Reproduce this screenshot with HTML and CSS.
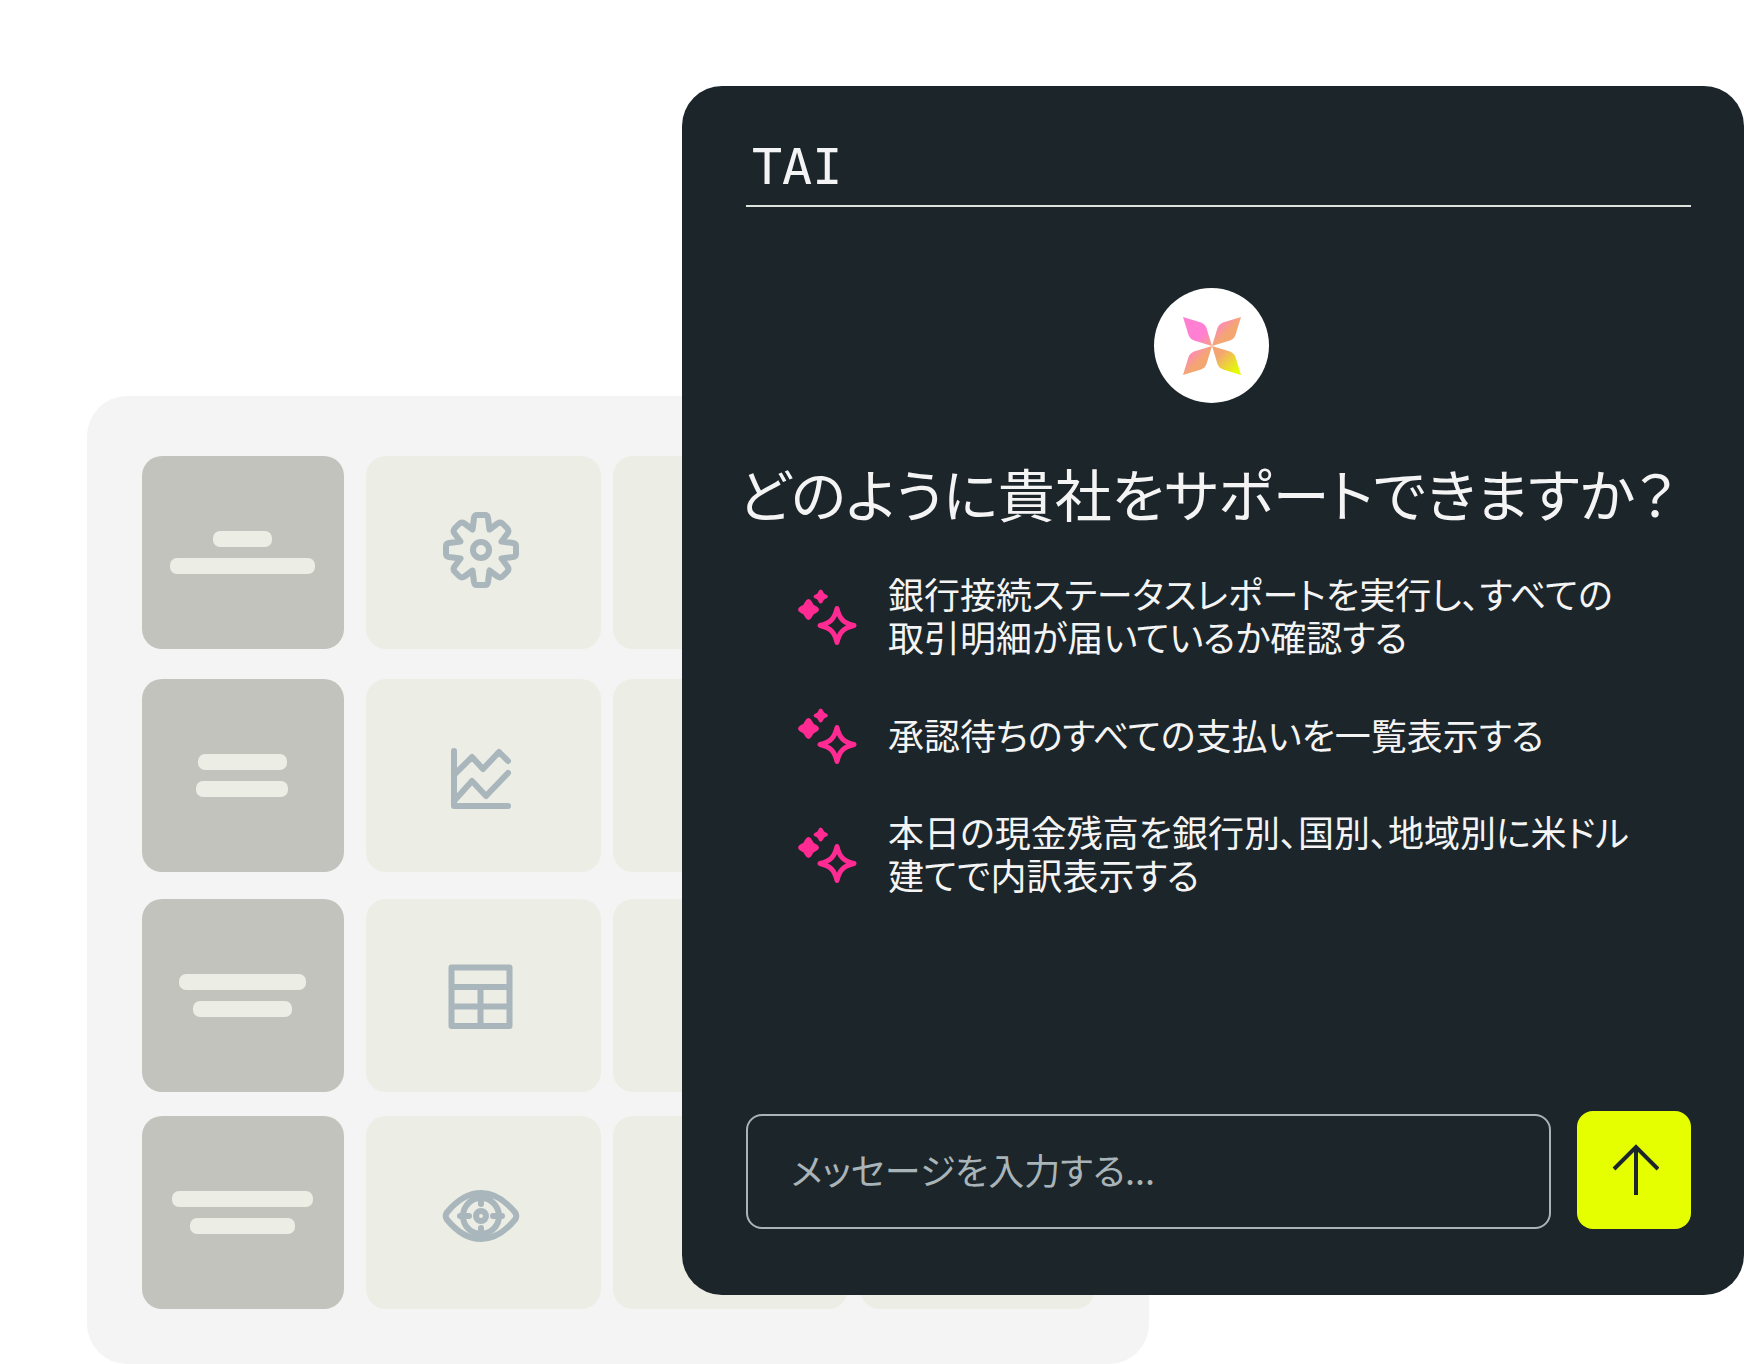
FILE: index.html
```html
<!DOCTYPE html>
<html lang="ja">
<head>
    <meta charset="UTF-8">
    <meta name="viewport" content="width=device-width, initial-scale=1.0">
    <title>TAI</title>
    <link rel="stylesheet" href="styles.css">
</head>
<body>
    <!-- Shared shapes -->
    <svg class="defs" width="0" height="0" aria-hidden="true">
        <symbol id="sparkles" viewBox="0 0 60 58">
            <path d="M23.500 .5 Q25.500 .5 26.500 3.500 Q27 4.500 28 5 Q31 6 31 7.500 Q31 9 28 10 Q27 10.500 26.500 11.500 Q25.500 14.500 23.500 14.500 Q22 14.500 21 11.500 Q20.500 10.500 19.500 10 Q16.500 9 16.500 7.500 Q16.500 6 19.500 5 Q20.500 4.500 21 3.500 Q22 .5 23.500 .5Z" fill="#ff2a92"/>
            <path d="M11.500 10 Q13.500 10 15 13 Q16 16 19 17 Q22 18.500 22 20.500 Q22 22.500 19 24 Q16 25 15 28 Q13.500 31 11.500 31 Q9.500 31 8 28 Q7 25 4 24 Q1 22.500 1 20.500 Q1 18.500 4 17 Q7 16 8 13 Q9.500 10 11.500 10Z" fill="#ff2a92"/>
            <path d="M40 19.500 C42.500 30 46.500 34 57 36.500 C46.500 39 42.500 43 40 53.500 C37.500 43 33.500 39 23 36.500 C33.500 34 37.500 30 40 19.500Z" fill="none" stroke="#ff2a92" stroke-width="5" stroke-linejoin="round"/>
        </symbol>
    </svg>

    <main class="page">
        <section class="board" aria-hidden="true">
            <div class="label"><span class="bar w-59"></span><span class="bar w-145"></span></div>
            <div class="cell">
                <svg class="icon" viewBox="0 0 90 90">
                    <g transform="translate(42 42)">
                        <path d="M-8.500 -20.500 L-7 -32 Q-6.500 -35 -4 -35 H4 Q6.500 -35 7 -32 L8.500 -20.500 L16.500 -26.500 Q19.500 -28.500 22 -26 L26 -22 Q28.500 -19.500 26.500 -16.500 L20.500 -8.500 L32 -7 Q35 -6.500 35 -4 V4 Q35 6.500 32 7 L20.500 8.500 L26.500 16.500 Q28.500 19.500 26 22 L22 26 Q19.500 28.500 16.500 26.500 L8.500 20.500 L7 32 Q6.500 35 4 35 H-4 Q-6.500 35 -7 32 L-8.500 20.500 L-16.500 26.500 Q-19.500 28.500 -22 26 L-26 22 Q-28.500 19.500 -26.500 16.500 L-20.500 8.500 L-32 7 Q-35 6.500 -35 4 V-4 Q-35 -6.500 -32 -7 L-20.500 -8.500 L-26.500 -16.500 Q-28.500 -19.500 -26 -22 L-22 -26 Q-19.500 -28.500 -16.500 -26.500 Z"/>
                        <circle r="8"/>
                    </g>
                </svg>
            </div>
            <div class="cell"></div>
            <div class="cell"></div>

            <div class="label"><span class="bar w-89"></span><span class="bar w-92"></span></div>
            <div class="cell">
                <svg class="icon" viewBox="0 0 90 90">
                    <path d="M15 20 V75 H69"/>
                    <path d="M15 44 L33 26 L44 38 L60 21 L69 30"/>
                    <path d="M15 70 L33 50 L47 65 L69 42"/>
                </svg>
            </div>
            <div class="cell"></div>
            <div class="cell"></div>

            <div class="label"><span class="bar w-127"></span><span class="bar w-99"></span></div>
            <div class="cell">
                <svg class="icon" viewBox="0 0 90 90">
                    <path d="M12.500 16.500 H70.500 V75 H12.500 Z M12.500 36 H70.500 M12.500 55.500 H70.500 M41.500 36 V75"/>
                </svg>
            </div>
            <div class="cell"></div>
            <div class="cell"></div>

            <div class="label"><span class="bar w-141"></span><span class="bar w-105"></span></div>
            <div class="cell">
                <svg class="icon" viewBox="0 0 90 90">
                    <g transform="translate(42 48)">
                        <path d="M-34.500 -3 C-24 -16 -12 -23 0 -23 S24 -16 34.500 -3 Q36 0 34.500 3 C24 16 12 23 0 23 S-24 16 -34.500 3 Q-36 0 -34.500 -3Z"/>
                        <circle r="18"/>
                        <circle r="5"/>
                        <path d="M-21 0 H-12 M12 0 H21 M0 -22 V-12 M0 12 V22"/>
                    </g>
                </svg>
            </div>
            <div class="cell"></div>
            <div class="cell"></div>
        </section>

        <section class="chat">
            <header class="chat-header">TAI</header>

            <div class="logo">
                <svg viewBox="-29 -29 58 58" width="58" height="58" aria-hidden="true">
                    <defs>
                        <linearGradient id="petal" gradientUnits="userSpaceOnUse" x1="-29" y1="-29" x2="29" y2="29">
                            <stop offset=".32" stop-color="#ff80d2"/>
                            <stop offset=".52" stop-color="#f4a672"/>
                            <stop offset=".64" stop-color="#f4a672"/>
                            <stop offset=".94" stop-color="#e5ff00"/>
                        </linearGradient>
                    </defs>
                    <g fill="url(#petal)">
                        <path d="M0 0 L-5.500 -18 Q-7 -22 -11 -23.500 L-29 -29 L-23.500 -11 Q-22 -7 -18 -5.500Z"/>
                        <path d="M0 0 L5.500 -18 Q7 -22 11 -23.500 L29 -29 L23.500 -11 Q22 -7 18 -5.500Z"/>
                        <path d="M0 0 L-5.500 18 Q-7 22 -11 23.500 L-29 29 L-23.500 11 Q-22 7 -18 5.500Z"/>
                        <path d="M0 0 L5.500 18 Q7 22 11 23.500 L29 29 L23.500 11 Q22 7 18 5.500Z"/>
                    </g>
                </svg>
            </div>

            <h1>どのように貴社をサポートできますか？</h1>

            <ul class="prompts">
                <li>
                    <svg class="sparkles"><use href="#sparkles"/></svg>
                    <p>銀行接続ステータスレポートを実行し、すべての<br>取引明細が届いているか確認する</p>
                </li>
                <li>
                    <svg class="sparkles"><use href="#sparkles"/></svg>
                    <p>承認待ちのすべての支払いを一覧表示する</p>
                </li>
                <li>
                    <svg class="sparkles"><use href="#sparkles"/></svg>
                    <p>本日の現金残高を銀行別、国別、地域別に米ドル<br>建てで内訳表示する</p>
                </li>
            </ul>

            <form class="composer" onsubmit="return false">
                <input type="text" aria-label="メッセージ" placeholder="メッセージを入力する...">
                <button type="submit" aria-label="送信">
                    <svg viewBox="0 0 50 54" width="50" height="54" fill="none" stroke="#1b252a" stroke-width="4">
                        <path d="M27 52 V5 M5 26 L27 4 L49 26"/>
                    </svg>
                </button>
            </form>
        </section>
    </main>
</body>
</html>
```

FILE: styles.css
```css
* {
    box-sizing: border-box;
}
body {
    margin: 0;
    background-color: #fff;
    color: #f4f4f4;
    font-family: "Noto Sans CJK JP", sans-serif;
    font-weight: 400;
    font-feature-settings: "palt";
}
.defs {
    position: absolute;
}

/* The two panels share one grid row and overlap in the third column */
.page {
    display: grid;
    grid-template-columns: 87fr 595fr 467fr 595fr;
    align-items: start;
    padding-top: 86px;
}

/* Board in the background */
.board {
    grid-column: 2 / 4;
    grid-row: 1;
    display: grid;
    grid-template-columns: 212fr 235fr 235fr 235fr;
    grid-template-rows: 223px 220px 217px 193px;
    column-gap: 12px;
    align-items: start;
    margin-top: 310px;
    padding: 60px 54px 55px 55px;
    border-radius: 40px;
    background-color: #f4f4f4;
}
.label,
.cell {
    display: flex;
    align-items: center;
    justify-content: center;
    height: 193px;
    border-radius: 20px;
}
.label {
    flex-direction: column;
    gap: 11px;
    margin-right: 10px;
    padding-right: 2px;
    background-color: #c2c3bc;
}
.cell {
    background-color: #ecede4;
}
.bar {
    height: 16px;
    border-radius: 7px;
    background-color: #ecede4;
}
.w-59 { width: 59px; }
.w-89 { width: 89px; }
.w-92 { width: 92px; }
.w-99 { width: 99px; }
.w-105 { width: 105px; }
.w-127 { width: 127px; }
.w-141 { width: 141px; }
.w-145 { width: 145px; }
.icon {
    width: 90px;
    height: 90px;
    fill: none;
    stroke: #a9b6bc;
    stroke-width: 6px;
    stroke-linecap: round;
    stroke-linejoin: round;
}

/* Chat panel */
.chat {
    grid-column: 3 / 5;
    grid-row: 1;
    display: flex;
    flex-direction: column;
    min-height: 1209px;
    padding: 0 53px 66px 64px;
    border-radius: 40px;
    background-color: #1b252a;
}
.chat-header {
    padding: 51px 0 8px 6px;
    border-bottom: 2px solid #dfe3dd;
    font-family: "DejaVu Sans Mono", monospace;
    font-size: 50px;
    line-height: 60px;
}
.logo {
    display: flex;
    align-items: center;
    justify-content: center;
    align-self: center;
    width: 115px;
    height: 115px;
    margin: 81px 14px 0 0;
    border-radius: 50%;
    background-color: #fff;
}
h1 {
    margin: 47px -8px 0;
    font-size: 57px;
    font-weight: 400;
    line-height: 84px;
    white-space: nowrap;
}
.prompts {
    display: flex;
    flex-direction: column;
    gap: 33px;
    margin: 38px 0 0;
    padding: 0 0 0 51px;
    list-style: none;
}
.prompts li {
    display: flex;
    align-items: center;
    gap: 31px;
    min-height: 86px;
}
.prompts p {
    margin: 0;
    font-size: 36px;
    line-height: 43px;
    white-space: nowrap;
}
.sparkles {
    flex: none;
    width: 60px;
    height: 58px;
    margin-top: 6px;
}
.composer {
    display: flex;
    align-items: flex-end;
    gap: 26px;
    margin-top: auto;
}
.composer input {
    flex: 1;
    min-width: 0;
    height: 115px;
    padding: 0 43px 6px;
    border: 2px solid #a9b4b9;
    border-radius: 16px;
    background-color: transparent;
    color: #f4f4f4;
    font: inherit;
    font-feature-settings: inherit;
    font-size: 36px;
}
.composer input::placeholder {
    color: #a9b4b9;
    opacity: 1;
}
.composer button {
    display: flex;
    align-items: center;
    justify-content: center;
    width: 114px;
    height: 118px;
    padding: 0;
    border: none;
    border-radius: 16px;
    background-color: #e5ff00;
    cursor: pointer;
}
```
